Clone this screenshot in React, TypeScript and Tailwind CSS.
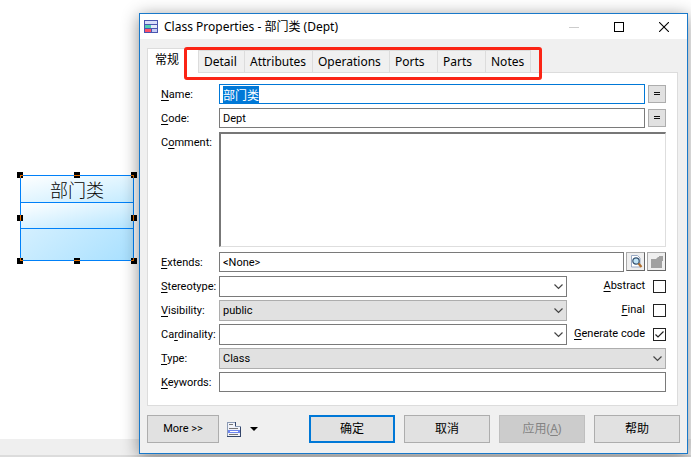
import { useEffect, useRef, type ReactNode } from "react";

const uiFont = "font-['Noto_Sans','Noto_Sans_CJK_SC',sans-serif]";
const formFont = "font-['Roboto','Noto_Sans_CJK_SC',sans-serif]";

const tabs = [
  { name: "Detail", width: "w-[46px]" },
  { name: "Attributes", width: "w-[68px]" },
  { name: "Operations", width: "w-[77px]" },
  { name: "Ports", width: "w-[48px]" },
  { name: "Parts", width: "w-[48px]" },
  { name: "Notes", width: "w-[46px]" },
];

const handles = [
  { place: "-left-[4px] -top-[4px]", line: "left-[3px] top-[3px] size-[3px] border-t border-l" },
  { place: "left-[53px] -top-[4px]", line: "left-0 top-[3px] h-px w-[6px] border-t" },
  { place: "-right-[4px] -top-[4px]", line: "left-0 top-[3px] size-[3px] border-t border-r" },
  { place: "-left-[4px] top-[39px]", line: "left-[3px] top-0 h-[6px] w-px border-l" },
  { place: "-right-[4px] top-[39px]", line: "left-[2px] top-0 h-[6px] w-px border-l" },
  { place: "-left-[4px] -bottom-[4px]", line: "left-[3px] top-0 size-[3px] border-b border-l" },
  { place: "left-[53px] -bottom-[4px]", line: "left-0 top-[2px] h-px w-[6px] border-t" },
  { place: "-right-[4px] -bottom-[4px]", line: "left-0 top-0 size-[3px] border-b border-r" },
];

function ClassSymbol() {
  return (
    <div className="absolute left-[20px] top-[175px] flex h-[86px] w-[114px] flex-col border border-[#0080f8] bg-linear-to-br from-[#e8f7ff] to-[#a8e0ff]">
      <div className="flex h-[27px] items-center justify-center border-b border-[#0080f8] bg-linear-to-br from-white to-[#c4ebff] font-['Noto_Sans_CJK_SC',sans-serif] text-[18px] leading-6 font-light text-black">
        部门类
      </div>
      <div className="h-[26px] border-b border-[#0080f8] bg-linear-to-br from-white to-[#b4e5ff]" />
      {handles.map(({ place, line }) => (
        <span key={place} className={`absolute size-[6px] bg-black ${place}`}>
          <span className={`absolute border-[#e87000] ${line}`} />
        </span>
      ))}
    </div>
  );
}

function FieldLabel({ id, before = "", mark, after }: { id: string; before?: string; mark: string; after: string }) {
  return (
    <label htmlFor={id} className="w-[58px] shrink-0 text-[11px] leading-[22px] whitespace-nowrap">
      {before}
      <span className="underline underline-offset-2">{mark}</span>
      {after}
    </label>
  );
}

function Row({ children }: { children: ReactNode }) {
  return <div className="flex h-6 items-start">{children}</div>;
}

function Combo({ id, value, filled }: { id: string; value: string; filled?: boolean }) {
  return (
    <div className="relative min-w-0 flex-1">
      <select
        id={id}
        defaultValue={value}
        className={`block h-[21px] w-full appearance-none border px-[3px] text-[11px] leading-4 ${
          filled ? "border-[#adadad] bg-[#e1e1e1]" : "border-[#7a7a7a] bg-white"
        }`}
      >
        <option>{value}</option>
      </select>
      <svg className="pointer-events-none absolute right-[4px] top-[7px]" width="9" height="7" viewBox="0 0 9 7">
        <path d="M0.5 1.5L4.5 5.5L8.5 1.5" fill="none" stroke="#444" strokeWidth="1.2" />
      </svg>
    </div>
  );
}

function Check({ id, mark, rest, checked }: { id: string; mark: string; rest: string; checked?: boolean }) {
  return (
    <div className="flex h-[20px] w-[99px] shrink-0 items-center justify-end gap-2">
      <label htmlFor={id} className="text-[11px] leading-4 whitespace-nowrap">
        <span className="underline underline-offset-2">{mark}</span>
        {rest}
      </label>
      <span className="relative size-[13px]">
        <input
          id={id}
          type="checkbox"
          defaultChecked={checked}
          className="block size-[13px] appearance-none border border-[#222] bg-white"
        />
        {checked && (
          <svg className="pointer-events-none absolute left-0 top-0" width="13" height="13" viewBox="0 0 13 13">
            <path d="M2.5 6.5L5 9L10.5 3.5" fill="none" stroke="#222" strokeWidth="1.2" />
          </svg>
        )}
      </span>
    </div>
  );
}

const inputBase = "block h-[20px] min-w-0 flex-1 border bg-white px-[3px] text-[11px] leading-[14px] outline-none";

function EqualsButton({ label }: { label: string }) {
  return (
    <button
      aria-label={label}
      className="mt-px ml-[3px] flex h-[18px] w-[18px] shrink-0 items-center justify-center border border-[#adadad] bg-[#e1e1e1]"
    >
      <svg width="6" height="4" viewBox="0 0 6 4" shapeRendering="crispEdges">
        <path d="M0 0h6v1H0zM0 2h6v1H0z" fill="#111" />
      </svg>
    </button>
  );
}

const toolButton =
  "flex h-[19px] w-[19px] shrink-0 items-center justify-center border border-r-[#666] border-b-[#666] border-t-[#aaa] border-l-[#aaa] bg-[#efefef]";
const footButton = "h-[28px] w-[86px] shrink-0 border text-[12px] leading-4";

export default function App() {
  const nameRef = useRef<HTMLInputElement>(null);
  useEffect(() => {
    nameRef.current?.focus();
    nameRef.current?.select();
  }, []);

  return (
    <div className="relative flex h-screen flex-col overflow-hidden bg-white text-black">
      <main className="flex-1">
        <ClassSymbol />
      </main>
      <footer className="h-[18px] border-b-2 border-[#dcdcdc] bg-[#efefef]" />

      <section
        role="dialog"
        aria-label="Class Properties"
        className={`absolute left-[139px] right-[3px] top-[13px] flex flex-col border border-[#1979ca] bg-[#f0f0f0] shadow-[0_3px_16px_rgba(0,0,0,0.45)] ${uiFont}`}
      >
        <header className="flex h-[25px] items-center bg-white pl-1">
          <svg width="14" height="13" viewBox="0 0 14 13" shapeRendering="crispEdges">
            <rect width="14" height="13" fill="#4a55b0" />
            <rect x="1" y="1" width="12" height="3" fill="#d9defa" />
            <rect x="1" y="5" width="6" height="3" fill="#52d0b4" />
            <rect x="7" y="5" width="6" height="3" fill="#e4e9fb" />
            <rect x="1" y="9" width="6" height="3" fill="#ff5068" />
            <rect x="8" y="9" width="5" height="3" fill="#c5cdf5" />
          </svg>
          <h1 className="ml-[6px] text-[12px] leading-4">Class Properties - 部门类 (Dept)</h1>
          <div className="mr-[18px] ml-auto flex items-center gap-[35px]">
            <button aria-label="Minimize" disabled>
              <svg width="10" height="10" viewBox="0 0 10 10" shapeRendering="crispEdges">
                <path d="M0 5h10v1H0z" fill="#ccc" />
              </svg>
            </button>
            <button aria-label="Maximize">
              <svg width="10" height="10" viewBox="0 0 10 10" shapeRendering="crispEdges">
                <path d="M0.5 0.5h9v9h-9z" fill="none" stroke="#000" />
              </svg>
            </button>
            <button aria-label="Close">
              <svg width="10" height="10" viewBox="0 0 10 10">
                <path d="M0 0L10 10M10 0L0 10" stroke="#000" strokeWidth="1.1" />
              </svg>
            </button>
          </div>
        </header>

        <div className="px-[7px] pt-[9px] pb-[10px]">
          <div role="tablist" className="relative flex items-end text-[12px] leading-4">
            <button
              role="tab"
              aria-selected="true"
              className="z-10 -mb-px h-[25px] w-[51px] border-t border-l border-[#dcdcdc] bg-white pr-[12px] pb-[2px]"
            >
              常规
            </button>
            {tabs.map((tab) => (
              <button
                key={tab.name}
                role="tab"
                aria-selected="false"
                className={`h-[22px] shrink-0 border-t border-l border-[#dcdcdc] bg-[#f0f0f0] pl-[5px] text-left last-of-type:border-r ${tab.width}`}
              >
                {tab.name}
              </button>
            ))}
            <div className="pointer-events-none absolute -top-px left-[37px] z-20 h-[33px] w-[358px] rounded-[3px] border-[3px] border-[#fb2415]" />
          </div>

          <div
            role="tabpanel"
            className={`mr-[2px] border border-[#dcdcdc] bg-white pt-[11px] pr-[11px] pb-[9px] pl-[13px] ${formFont}`}
          >
            <Row>
              <FieldLabel id="name" mark="N" after="ame:" />
              <input
                id="name"
                ref={nameRef}
                defaultValue="部门类"
                className="block h-[20px] min-w-0 flex-1 border border-[#0078d7] bg-white px-[3px] text-[12px] leading-[14px] outline-none selection:bg-[#0078d7] selection:text-white"
              />
              <EqualsButton label="Name formula" />
            </Row>
            <Row>
              <FieldLabel id="code" mark="C" after="ode:" />
              <input id="code" defaultValue="Dept" className={`${inputBase} border-[#7a7a7a]`} />
              <EqualsButton label="Code formula" />
            </Row>
            <div className="flex h-[120px] items-start">
              <FieldLabel id="comment" before="C" mark="o" after="mment:" />
              <textarea
                id="comment"
                className="block h-[115px] min-w-0 flex-1 resize-none border border-t-2 border-l-2 border-t-[#777] border-r-[#dedede] border-b-[#dedede] border-l-[#777] bg-white p-1 text-[11px] outline-none"
              />
            </div>
            <Row>
              <FieldLabel id="extends" mark="E" after="xtends:" />
              <input id="extends" defaultValue="&lt;None&gt;" className={`${inputBase} border-[#7a7a7a]`} />
              <div className="ml-[2px] flex gap-[2px]">
                <button aria-label="Find" className={toolButton}>
                  <svg width="14" height="14" viewBox="0 0 14 14">
                    <path d="M2.5 0.5h6l2.500 2.500v9h-8.500z" fill="#fff" stroke="#99a9c4" />
                    <circle cx="7" cy="6" r="3.200" fill="#bfe3f5" stroke="#34506f" strokeWidth="1.200" />
                    <path d="M9.500 8.500L12.500 12" stroke="#b3702c" strokeWidth="2.200" />
                  </svg>
                </button>
                <button aria-label="Properties" className={toolButton} disabled>
                  <svg width="14" height="14" viewBox="0 0 14 14">
                    <path d="M1 4h5l2-2h1V1h4v5h-1v7H1z" fill="#a0a0a0" />
                  </svg>
                </button>
              </div>
            </Row>
            <Row>
              <FieldLabel id="stereotype" mark="S" after="tereotype:" />
              <Combo id="stereotype" value="" />
              <Check id="abstract" mark="A" rest="bstract" />
            </Row>
            <Row>
              <FieldLabel id="visibility" mark="V" after="isibility:" />
              <Combo id="visibility" value="public" filled />
              <Check id="final" mark="F" rest="inal" />
            </Row>
            <Row>
              <FieldLabel id="cardinality" before="Ca" mark="r" after="dinality:" />
              <Combo id="cardinality" value="" />
              <Check id="generate" mark="G" rest="enerate code" checked />
            </Row>
            <Row>
              <FieldLabel id="type" mark="T" after="ype:" />
              <Combo id="type" value="Class" filled />
            </Row>
            <Row>
              <FieldLabel id="keywords" mark="K" after="eywords:" />
              <input id="keywords" className={`${inputBase} border-[#7a7a7a]`} />
            </Row>
          </div>

          <div className="mt-[9px] flex items-center">
            <button className={`h-[28px] w-[72px] border border-[#adadad] bg-[#e1e1e1] text-[11px] ${formFont}`}>
              More &gt;&gt;
            </button>
            <button aria-label="Menu" className="ml-2 flex items-center gap-[9px]">
              <svg width="14" height="15" viewBox="0 0 14 15" shapeRendering="crispEdges">
                <path d="M0 0h8v4h6v11H0z" fill="#8c9bb5" />
                <path d="M1 1h7v4h5v9H1z" fill="#f1f3fa" />
                <path d="M8 0h1v4H8zM13 5h1v10h-1zM0 14h14v1H0z" fill="#34466b" />
                <path d="M2 2h4v1H2zM2 6h9v1H2zM2 12h9v1H2z" fill="#777" />
                <path d="M1 8h12v3H1z" fill="#6f86ee" />
                <path d="M3 9h8v1H3z" fill="#fff" />
              </svg>
              <svg width="8" height="4" viewBox="0 0 8 4">
                <path d="M0 0h8L4 4z" fill="#000" />
              </svg>
            </button>
            <div className="ml-auto flex gap-[9px]">
              <button className={`${footButton} border-2 border-[#0078d7] bg-[#e1e1e1]`}>确定</button>
              <button className={`${footButton} border-[#adadad] bg-[#e1e1e1]`}>取消</button>
              <button disabled className={`${footButton} border-[#bfbfbf] bg-[#cccccc] text-[#838383]`}>
                应用(<span className="underline underline-offset-2">A</span>)
              </button>
              <button className={`${footButton} border-[#adadad] bg-[#e1e1e1]`}>帮助</button>
            </div>
          </div>
        </div>
      </section>
    </div>
  );
}
